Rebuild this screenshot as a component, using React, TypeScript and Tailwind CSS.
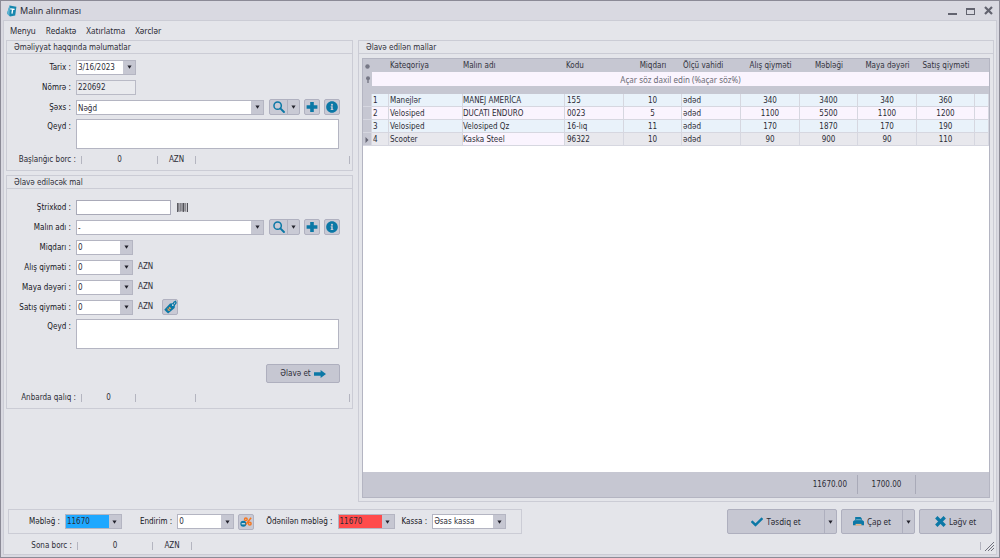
import React from 'react';
import { FaCheck, FaInfoCircle } from 'react-icons/fa';

interface Item {
  id: number;
  category: string;
  name: string;
  code: string;
  qty: number;
  unit: string;
  buyPrice: number;
  total: number;
  cost: number;
  sellPrice: number;
}

const items: Item[] = [
  { id: 1, category: 'Manejlər', name: 'MANEJ AMERİCA', code: '155', qty: 10, unit: 'ədəd', buyPrice: 340, total: 3400, cost: 340, sellPrice: 360 },
  { id: 2, category: 'Velosiped', name: 'DUCATI ENDURO', code: '0023', qty: 5, unit: 'ədəd', buyPrice: 1100, total: 5500, cost: 1100, sellPrice: 1200 },
  { id: 3, category: 'Velosiped', name: 'Velosiped Qz', code: '16-lıq', qty: 11, unit: 'ədəd', buyPrice: 170, total: 1870, cost: 170, sellPrice: 190 },
  { id: 4, category: 'Scooter', name: 'Kaska Steel', code: '96322', qty: 10, unit: 'ədəd', buyPrice: 90, total: 900, cost: 90, sellPrice: 110 },
];

const menu = ['Menyu', 'Redaktə', 'Xatırlatma', 'Xərclər'];

const rowColors = ['bg-[#e9f2fa]', 'bg-[#faf4fe]'];

const Caret = () => (
  <svg viewBox="0 0 5 4" className="h-1 w-[5px]" fill="#22222c">
    <path d="M0.4 0.4h4.2L2.5 3.8z" />
  </svg>
);

const SearchIcon = () => (
  <svg viewBox="0 0 16 16" className="size-3" fill="none" stroke="#0b78a6">
    <circle cx="6.2" cy="6.2" r="4.9" strokeWidth="2" />
    <path d="M9.8 9.8l4.8 4.8" strokeWidth="2.6" strokeLinecap="round" />
  </svg>
);

const PlusIcon = () => (
  <svg viewBox="0 0 12 12" className="size-3" fill="#0b78a6">
    <path d="M4.2 1h3.6v3.2H11.4v3.6H7.8V11H4.2V7.8H0.6V4.2h3.6z" />
  </svg>
);

const CrossIcon = () => (
  <svg viewBox="0 0 12 12" className="size-[11px]" stroke="#0b78a6" strokeWidth="3.6">
    <path d="M1.4 1.4l9.2 9.2M10.6 1.4l-9.2 9.2" />
  </svg>
);

const PrintIcon = () => (
  <svg viewBox="0 0 12 12" className="size-[11px]">
    <path d="M2.4 1.2h5.8l1.4 1.4V5H2.4z" fill="#0b78a6" />
    <path d="M3.4 4h5.2" stroke="#8fc0d6" strokeWidth="0.8" />
    <path d="M1.6 4.6h8.8L12 6v4.2H0V6z" fill="#0b78a6" />
    <path d="M2.8 8.6h6.4v2H2.8z" fill="#e6b48c" />
  </svg>
);

const BarcodeIcon = () => (
  <svg viewBox="0 0 11 9" className="h-[9px] w-[11px]">
    <rect width="11" height="9" fill="#a4a4aa" />
    <path d="M1.5 0v8M3.5 0v8M5.2 0v8M8.4 0v8" stroke="#77777d" strokeWidth="0.7" />
    <path d="M0.4 0v9M6.5 0v9M10.5 0v9" stroke="#3c3c42" strokeWidth="0.8" />
    <path d="M4.4 8v1M7.4 8v1M9.4 0v9" stroke="#e2e2e6" strokeWidth="0.6" />
  </svg>
);

const TagIcon = () => (
  <svg viewBox="0 0 16 16" className="size-[14px]">
    <path d="M1.4 11.2L8 4l4-.4 1.6 2-.3 3.4-7.5 6.4z" fill="#0b78a6" />
    <path d="M10.6 6.4l1.9-4 1.8-.8.7 1.8-2.4 3" fill="none" stroke="#0b78a6" strokeWidth="1.4" />
    <circle cx="11.2" cy="5.8" r="1" fill="#e4e5ea" />
    <path d="M5 9.8l2.8 2.4M6.8 8.2l2.2 1.8M5.6 12l2.8-3.4" stroke="#dda05c" strokeWidth="1.2" />
  </svg>
);

const DiscountIcon = () => (
  <svg viewBox="0 0 16 16" className="size-3" fill="none">
    <circle cx="4.4" cy="10.4" r="4" fill="#0b78a6" />
    <path d="M2.2 10.4h4.4" stroke="#fff" strokeWidth="1.4" />
    <circle cx="7.8" cy="4.4" r="1.8" stroke="#f5761e" strokeWidth="1.9" />
    <circle cx="13" cy="10.2" r="1.8" stroke="#f5761e" strokeWidth="1.9" />
    <path d="M14.8 2.4L7.8 11.4" stroke="#f5761e" strokeWidth="2" />
  </svg>
);

const ArrowIcon = () => (
  <svg viewBox="0 0 12 8" className="h-2 w-3" fill="#0b78a6">
    <path d="M0 2.2h6.6V0L12 4 6.6 8V5.8H0z" />
  </svg>
);

const Logo = () => (
  <svg viewBox="0 0 10 12" className="h-3 w-2.5">
    <path d="M2.6 0.4L9.4 1.8 8.2 10.6 3 11.4 0 8.4z" fill="#1787ae" />
    <path d="M0 8.4L2.4 10.8 3 0.8 2.4 0.4z" fill="#5fb4d2" />
    <path d="M3.2 3.8l4.4.6M5.6 4.3L5 8.6" stroke="#fff" strokeWidth="1.3" />
  </svg>
);

const inputBox = 'flex h-[15px] border border-[#b4b5c2] bg-white';

interface ComboProps {
  id: string;
  value: string;
  width?: string;
  color?: string;
}

const Combo: React.FC<ComboProps> = ({ id, value, width = 'w-[57px]', color = '' }) => (
  <div className={`${inputBox} ${width}`}>
    <input id={id} defaultValue={value} className={`min-w-0 flex-1 pt-px pl-px outline-none ${color}`} />
    <button aria-label="Aç" className="flex w-3 items-center justify-center bg-[#c6c7d2]">
      <Caret />
    </button>
  </div>
);

const Select: React.FC<ComboProps> = ({ id, value, width = '' }) => (
  <div className={`${inputBox} relative ${width}`}>
    <select id={id} className="w-full appearance-none pt-px pl-px outline-none">
      <option>{value}</option>
    </select>
    <span className="pointer-events-none absolute inset-y-0 right-0 flex w-3 items-center justify-center bg-[#c6c7d2]">
      <Caret />
    </span>
  </div>
);

interface RowProps {
  id: string;
  label: string;
  children: React.ReactNode;
}

const Row: React.FC<RowProps> = ({ id, label, children }) => (
  <div className="flex h-5 items-center leading-[14px]">
    <label htmlFor={id} className="w-[69px] shrink-0 pt-px pr-[5px] text-right text-[#15151c]">{label} :</label>
    {children}
  </div>
);

const NoteRow = ({ id }: { id: string }) => (
  <div className="flex pt-0.5">
    <label htmlFor={id} className="w-[69px] shrink-0 pt-0.5 pr-[5px] text-right text-[#15151c]">Qeyd :</label>
    <textarea id={id} className="mr-[13px] h-[30px] flex-1 resize-none border border-[#b4b5c2] bg-white outline-none" />
  </div>
);

const iconButton = 'flex size-4 items-center justify-center rounded-xs border border-[#b0b1c0] bg-[#c9cad5] text-[#0b78a6]';

const LookupButtons = () => (
  <div className="ml-[5px] flex gap-1">
    <div className="flex h-4 w-[31px] rounded-xs border border-[#b0b1c0] bg-[#c9cad5]">
      <button aria-label="Axtar" className="flex flex-1 items-center justify-center">
        <SearchIcon />
      </button>
      <button aria-label="Seçimlər" className="flex w-3 items-center justify-center border-l border-[#b0b1c0]">
        <Caret />
      </button>
    </div>
    <button aria-label="Yeni" className={iconButton}><PlusIcon /></button>
    <button aria-label="Məlumat" className={iconButton}><FaInfoCircle className="size-3" /></button>
  </div>
);

interface PanelProps {
  title: string;
  className?: string;
  children: React.ReactNode;
}

const Panel: React.FC<PanelProps> = ({ title, className = '', children }) => (
  <section className={`border border-[#cbccd5] ${className}`}>
    <h2 className="h-[13px] border-b border-[#cbccd5] pl-[7px] leading-[14px]">{title}</h2>
    {children}
  </section>
);

const Sep = () => <span className="h-2 w-px shrink-0 bg-[#b4b5c0]" />;

interface ActionProps {
  icon: React.ReactNode;
  label: string;
  width: string;
  menu?: boolean;
}

const Action: React.FC<ActionProps> = ({ icon, label, width, menu }) => (
  <div className={`flex h-[25px] rounded-xs border border-[#aeafbe] bg-[#c6c7d2] ${width}`}>
    <button className="flex flex-1 items-center justify-center gap-[3px] font-['Noto_Sans',sans-serif]">
      {icon}
      {label}
    </button>
    {menu && (
      <button aria-label={`${label} seçimləri`} className="flex w-3 items-center justify-center border-l border-[#aeafbe]">
        <Caret />
      </button>
    )}
  </div>
);

const ItemsTable = () => (
  <div className="m-[3px] mt-1 flex flex-1 flex-col border border-[#b4b5c2] bg-white">
    <table className="w-full table-fixed border-separate border-spacing-0 text-left">
      <colgroup>
        <col className="w-[9px]" />
        <col className="w-[17px]" />
        <col className="w-[74px]" />
        <col />
        <col className="w-[59px]" />
        <col className="w-[58px]" />
        <col className="w-[59px]" />
        <col className="w-[59px]" />
        <col className="w-[58px]" />
        <col className="w-[59px]" />
        <col className="w-[58px]" />
        <col className="w-[14px]" />
      </colgroup>
      <thead className="bg-[#c6c7d2] text-[#33333d]">
        <tr className="h-[13px] *:p-0 *:pt-px *:font-normal">
          <td>
            <svg viewBox="0 0 5 5" className="mx-auto size-[5px]" fill="#777886">
              <circle cx="2.5" cy="2.5" r="2.2" />
            </svg>
          </td>
          <td />
          <th><span className="pl-px">Kateqoriya</span></th>
          <th>Malın adı</th>
          <th><span className="pl-px">Kodu</span></th>
          <th className="text-center">Miqdarı</th>
          <th><span className="pl-px">Ölçü vahidi</span></th>
          <th className="text-center">Alış qiyməti</th>
          <th className="text-center">Məbləği</th>
          <th className="text-center">Maya dəyəri</th>
          <th className="text-center">Satış qiyməti</th>
          <td />
        </tr>
        <tr className="h-[14px] *:p-0">
          <td>
            <svg viewBox="0 0 6 7" className="mx-auto h-[7px] w-1.5" fill="#777886">
              <circle cx="3" cy="2.2" r="2" />
              <path d="M2.3 4h1.4v3H2.3z" />
            </svg>
          </td>
          <td colSpan={11} className="bg-[#faf4fe]">
            <input
              aria-label="Axtarış"
              placeholder="Açar söz daxil edin (%açar söz%)"
              className="block h-[14px] w-full text-center font-['Noto_Sans',sans-serif] outline-none placeholder:text-[#6c6c76]"
            />
          </td>
        </tr>
        <tr className="h-2"><td colSpan={12} className="p-0" /></tr>
      </thead>
      <tbody>
        {items.map((item, i) => {
          const current = i === items.length - 1;
          return (
            <tr
              key={item.id}
              className={`h-[13px] leading-[11px] *:border-r *:border-b *:border-[#d6d7e0] *:p-0 *:pt-px ${current ? 'bg-[#e8e8ed]' : rowColors[i % 2]}`}
            >
              <td className="bg-[#c6c7d2]">
                {current && (
                  <svg viewBox="0 0 4 6" className="mx-auto h-1.5 w-1" fill="#666775"><path d="M0.5 0v6L3.5 3z" /></svg>
                )}
              </td>
              <td><span className="pl-px">{item.id}</span></td>
              <td><span className="pl-px">{item.category}</span></td>
              <td className={current ? 'bg-[#faf4fe]' : ''}>{item.name}</td>
              <td><span className="pl-0.5">{item.code}</span></td>
              <td className="text-center">{item.qty}</td>
              <td><span className="pl-px">{item.unit}</span></td>
              <td className="text-center">{item.buyPrice}</td>
              <td className="text-center">{item.total}</td>
              <td className="text-center">{item.cost}</td>
              <td className="text-center">{item.sellPrice}</td>
              <td />
            </tr>
          );
        })}
      </tbody>
    </table>
    <div className="mt-auto flex h-[25px] items-center justify-end bg-[#c6c7d2] leading-[14px]">
      <span className="pr-2.5">11670.00</span>
      <span className="flex h-[19px] w-[59px] items-center justify-center border-x border-[#a9aab8]">1700.00</span>
      <span className="w-[73px]" />
    </div>
  </div>
);

const App = () => (
  <div className="flex min-h-screen flex-col border border-[#8b8a96] bg-[#d9d9e1] px-0.5 pb-0.5 font-['DejaVu_Sans_Condensed','Noto_Sans',sans-serif] text-[8px] leading-3 text-[#2c2c36]">
    <header className="flex h-[19px] items-center pr-1 pl-1">
      <Logo />
      <h1 className="ml-[3px] flex-1 font-['Noto_Sans',sans-serif] text-[9px]">Malın alınması</h1>
      <div className="flex items-center gap-[9px] text-[#62636f]">
        <button aria-label="Kiçilt">
          <svg viewBox="0 0 9 9" className="size-[9px]"><path d="M0 7h9v2H0z" fill="currentColor" /></svg>
        </button>
        <button aria-label="Böyüt">
          <svg viewBox="0 0 9 9" className="size-[9px]"><path d="M0 2h9v7H0zM1 4v4h7V4z" fill="currentColor" fillRule="evenodd" /></svg>
        </button>
        <button aria-label="Bağla">
          <svg viewBox="0 0 9 9" className="size-[9px]"><path d="M1 1l7 7M8 1L1 8" stroke="currentColor" strokeWidth="2.2" /></svg>
        </button>
      </div>
    </header>

    <div className="flex flex-1 flex-col border border-[#cbccd5] bg-[#e4e5ea]">
      <nav className="flex h-[19px] items-center gap-[10px] pl-1.5 font-['Noto_Sans',sans-serif]">
        {menu.map((m) => (
          <button key={m}>{m}</button>
        ))}
      </nav>

      <main className="flex flex-1 gap-[5px] px-0.5">
        <div className="flex w-[347px] shrink-0 flex-col gap-1">
          <Panel title="Əməliyyat haqqında məlumatlar">
            <div className="pt-[3px]">
              <Row id="date" label="Tarix">
                <Combo id="date" value="3/16/2023" width="w-[60px]" />
              </Row>
              <Row id="number" label="Nömrə">
                <input id="number" readOnly value="220692" className="h-[15px] w-[60px] border border-[#b9bac6] bg-[#e9eaee] pt-px pl-px outline-none" />
              </Row>
              <Row id="person" label="Şəxs">
                <Select id="person" value="Nəğd" width="w-[188px]" />
                <LookupButtons />
              </Row>
              <NoteRow id="note" />
              <div className="flex h-[21px] items-center pr-0.5">
                <span className="w-[69px] text-right">Başlanğıc borc :</span>
                <span className="w-[5px]" />
                <Sep />
                <span className="w-[75px] text-center">0</span>
                <Sep />
                <span className="w-[37px] text-center">AZN</span>
                <Sep />
                <span className="flex-1" />
                <Sep />
              </div>
            </div>
          </Panel>

          <Panel title="Əlavə ediləcək mal">
            <div className="pt-2">
              <Row id="barcode" label="Ştrixkod">
                <input id="barcode" className="h-[15px] w-[95px] border border-[#a9aab8] bg-white pl-px outline-none" />
                <button aria-label="Ştrixkod yarat" className="ml-1.5"><BarcodeIcon /></button>
              </Row>
              <Row id="item" label="Malın adı">
                <Select id="item" value="-" width="w-[188px]" />
                <LookupButtons />
              </Row>
              <Row id="qty" label="Miqdarı">
                <Combo id="qty" value="0" />
              </Row>
              <Row id="buy" label="Alış qiyməti">
                <Combo id="buy" value="0" />
                <span className="ml-[5px]">AZN</span>
              </Row>
              <Row id="cost" label="Maya dəyəri">
                <Combo id="cost" value="0" />
                <span className="ml-[5px]">AZN</span>
              </Row>
              <Row id="sell" label="Satış qiyməti">
                <Combo id="sell" value="0" />
                <span className="ml-[5px]">AZN</span>
                <button aria-label="Qiymətlər" className={`${iconButton} ml-[9px]`}><TagIcon /></button>
              </Row>
              <NoteRow id="itemNote" />
              <button className="mt-[15px] mr-3 ml-auto flex h-[19px] w-[74px] items-center justify-center gap-[3px] rounded-xs border border-[#aeafbe] bg-[#c6c7d2]">
                Əlavə et
                <ArrowIcon />
              </button>
              <div className="mt-[5px] flex h-5 items-center pr-0.5">
                <span className="w-[69px] text-right">Anbarda qalıq :</span>
                <span className="w-[5px]" />
                <Sep />
                <span className="w-[53px] text-center">0</span>
                <Sep />
                <span className="w-[59px]" />
                <Sep />
                <span className="flex-1" />
                <Sep />
              </div>
            </div>
          </Panel>
        </div>

        <Panel title="Əlavə edilən mallar" className="flex min-w-0 flex-1 flex-col">
          <ItemsTable />
        </Panel>
      </main>

      <footer>
        <div className="mt-[7px] flex items-center justify-between pr-1 pl-1">
          <div className="flex h-[25px] w-[514px] items-center border border-[#cbccd5] pl-5">
            <label htmlFor="total" className="mr-[5px] text-[#15151c]">Məbləğ :</label>
            <Combo id="total" value="11670" color="bg-[#1fa8ff]" />
            <label htmlFor="discount" className="mr-[5px] ml-[18px] text-[#15151c]">Endirim :</label>
            <Combo id="discount" value="0" />
            <button aria-label="Endirim faizi" className={`${iconButton} ml-1`}><DiscountIcon /></button>
            <label htmlFor="paid" className="mr-[5px] ml-3 text-[#15151c]">Ödənilən məbləğ :</label>
            <Combo id="paid" value="11670" color="bg-[#ff4b4b]" />
            <label htmlFor="cash" className="mr-[5px] ml-[7px] text-[#15151c]">Kassa :</label>
            <Select id="cash" value="Əsas kassa" width="w-[74px]" />
          </div>
          <div className="flex gap-1">
            <Action icon={<FaCheck className="size-3 text-[#0b78a6]" />} label="Təsdiq et" width="w-[110px]" menu />
            <Action icon={<PrintIcon />} label="Çap et" width="w-[74px]" menu />
            <Action icon={<CrossIcon />} label="Ləğv et" width="w-[73px]" />
          </div>
        </div>
        <div className="flex h-5 items-center pt-1 leading-[14px]">
          <span className="w-[68px] text-right">Sona borc :</span>
          <span className="w-[5px]" />
          <Sep />
          <span className="w-[74px] text-center">0</span>
          <Sep />
          <span className="w-[38px] text-center">AZN</span>
          <Sep />
          <span className="flex-1" />
          <Sep />
          <svg viewBox="0 0 9 9" className="mr-0.5 ml-1 size-[9px]" stroke="#6f707c" strokeWidth="1">
            <path d="M0 9L9 0M3 9l6-6M6 9l3-3" />
          </svg>
        </div>
      </footer>
    </div>
  </div>
);

export default App;
